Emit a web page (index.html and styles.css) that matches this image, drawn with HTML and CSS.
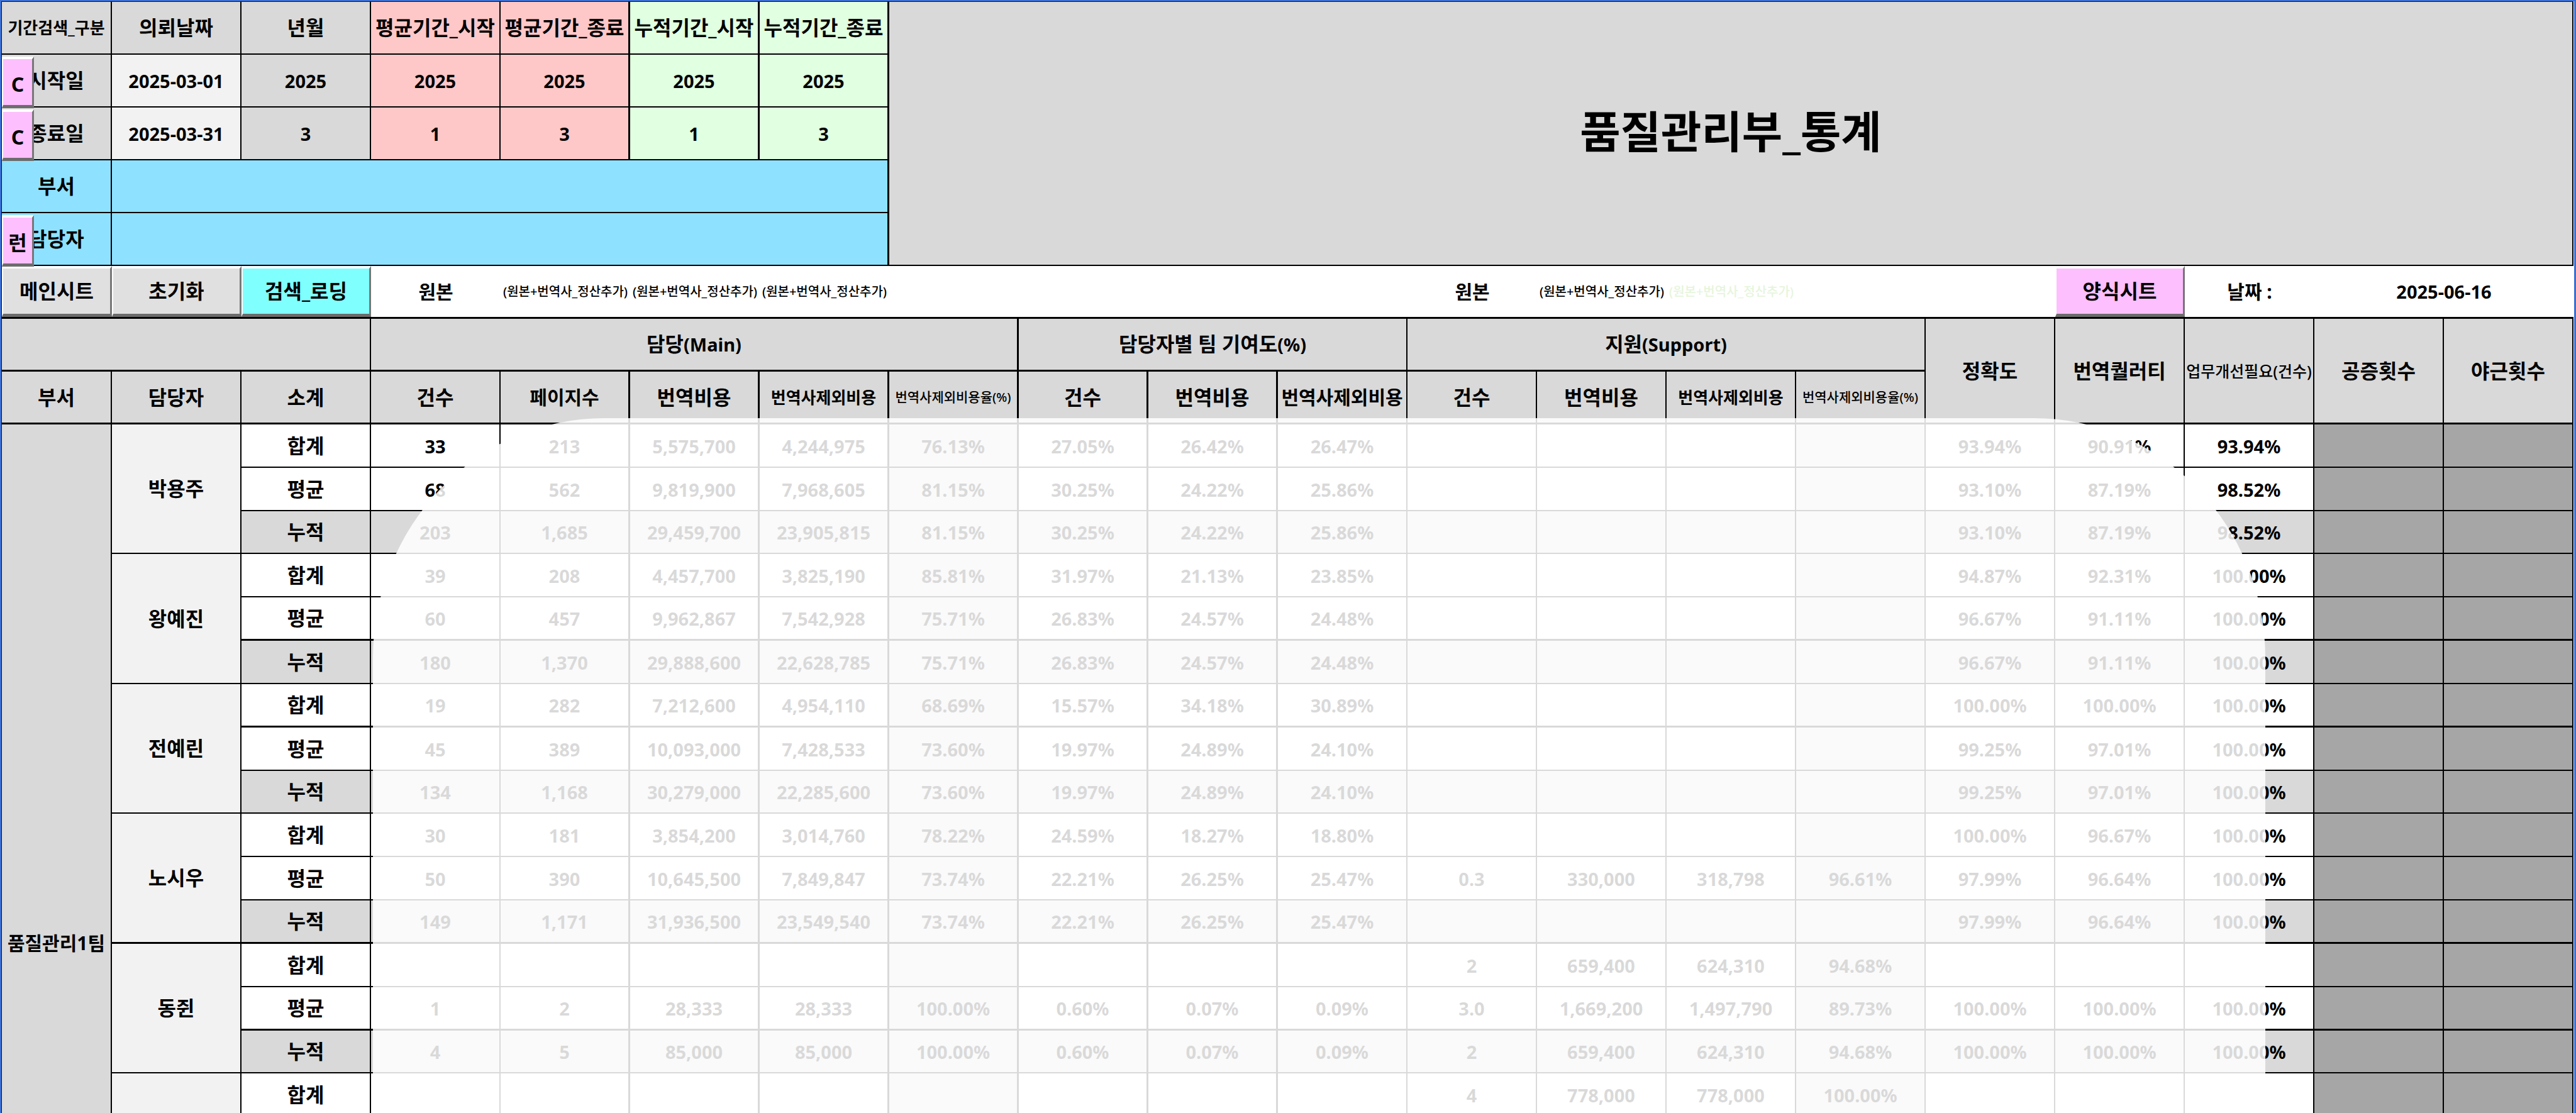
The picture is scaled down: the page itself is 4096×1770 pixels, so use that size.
FILE: index.html
```html
<!DOCTYPE html>
<html lang="ko">
<head>
<meta charset="utf-8">
<title>품질관리부_통계</title>
<link rel="stylesheet" href="styles.css">
</head>
<body>
<main class="window">
<div class="sheet">

<header class="top columns">
<table class="filter">
<colgroup><col class="first"><col><col><col><col><col><col></colgroup>
<tr><th class="mid">기간검색_구분</th><th>의뢰날짜</th><th>년월</th><th class="pink">평균기간_시작</th><th class="pink heavy">평균기간_종료</th><th class="green heavy">누적기간_시작</th><th class="green heavy">누적기간_종료</th></tr>
<tr><th class="anchor">시작일<button class="key" type="button">C</button></th><td class="pale">2025-03-01</td><td>2025</td><td class="pink">2025</td><td class="pink heavy">2025</td><td class="green heavy">2025</td><td class="green heavy">2025</td></tr>
<tr><th class="anchor">종료일<button class="key" type="button">C</button></th><td class="pale">2025-03-31</td><td>3</td><td class="pink">1</td><td class="pink heavy">3</td><td class="green heavy">1</td><td class="green heavy">3</td></tr>
<tr><th class="sky">부서</th><td class="sky heavy" colspan="6"></td></tr>
<tr><th class="sky anchor">담당자<button class="key" type="button">런</button></th><td class="sky heavy" colspan="6"></td></tr>
</table>
<h1 class="title">품질관리부_통계</h1>
</header>

<div class="toolbar columns">
<button class="tool" type="button">메인시트</button>
<button class="tool" type="button">초기화</button>
<button class="tool cyan" type="button">검색_로딩</button>
<span class="origin">원본</span>
<span class="note">(원본+번역사_정산추가)</span>
<span class="note">(원본+번역사_정산추가)</span>
<span class="note">(원본+번역사_정산추가)</span>
<span class="origin support">원본</span>
<span class="note">(원본+번역사_정산추가)</span>
<span class="note faint">(원본+번역사_정산추가)</span>
<button class="tool violet form" type="button">양식시트</button>
<span class="origin">날짜 :</span>
<span class="date">2025-06-16</span>
</div>

<section class="stats">
<table class="data">
<colgroup><col class="first"><col span="19"></colgroup>
<thead>
<tr><th colspan="3"></th><th class="heavy" colspan="5">담당<span class="latin">(Main)</span></th><th colspan="3">담당자별 팀 기여도<span class="latin">(%)</span></th><th colspan="4">지원<span class="latin">(Support)</span></th><th rowspan="2">정확도</th><th rowspan="2">번역퀄러티</th><th class="need" rowspan="2">업무개선필요(건수)</th><th rowspan="2">공증횟수</th><th rowspan="2">야근횟수</th></tr>
<tr><th>부서</th><th>담당자</th><th>소계</th><th>건수</th><th class="wide heavy">페이지수</th><th class="heavy">번역비용</th><th class="mid heavy">번역사제외비용</th><th class="rate heavy">번역사제외비용율<span class="latin">(%)</span></th><th class="heavy">건수</th><th class="heavy">번역비용</th><th class="wide">번역사제외비용</th><th>건수</th><th>번역비용</th><th class="mid">번역사제외비용</th><th class="rate">번역사제외비용율<span class="latin">(%)</span></th></tr>
</thead>
<tbody>
<tr><th class="team" rowspan="24">품질관리1팀</th><th class="person" rowspan="3">박용주</th><th>합계</th><td>33</td><td>213</td><td>5,575,700</td><td>4,244,975</td><td>76.13%</td><td>27.05%</td><td>26.42%</td><td>26.47%</td><td></td><td></td><td></td><td></td><td>93.94%</td><td>90.91%</td><td>93.94%</td><td></td><td></td></tr>
<tr><th>평균</th><td>68</td><td>562</td><td>9,819,900</td><td>7,968,605</td><td>81.15%</td><td>30.25%</td><td>24.22%</td><td>25.86%</td><td></td><td></td><td></td><td></td><td>93.10%</td><td>87.19%</td><td>98.52%</td><td></td><td></td></tr>
<tr class="total"><th>누적</th><td>203</td><td>1,685</td><td>29,459,700</td><td>23,905,815</td><td>81.15%</td><td>30.25%</td><td>24.22%</td><td>25.86%</td><td></td><td></td><td></td><td></td><td>93.10%</td><td>87.19%</td><td>98.52%</td><td></td><td></td></tr>
<tr><th class="person" rowspan="3">왕예진</th><th>합계</th><td>39</td><td>208</td><td>4,457,700</td><td>3,825,190</td><td>85.81%</td><td>31.97%</td><td>21.13%</td><td>23.85%</td><td></td><td></td><td></td><td></td><td>94.87%</td><td>92.31%</td><td>100.00%</td><td></td><td></td></tr>
<tr class="strong"><th>평균</th><td>60</td><td>457</td><td>9,962,867</td><td>7,542,928</td><td>75.71%</td><td>26.83%</td><td>24.57%</td><td>24.48%</td><td></td><td></td><td></td><td></td><td>96.67%</td><td>91.11%</td><td>100.00%</td><td></td><td></td></tr>
<tr class="total"><th>누적</th><td>180</td><td>1,370</td><td>29,888,600</td><td>22,628,785</td><td>75.71%</td><td>26.83%</td><td>24.57%</td><td>24.48%</td><td></td><td></td><td></td><td></td><td>96.67%</td><td>91.11%</td><td>100.00%</td><td></td><td></td></tr>
<tr class="strong"><th class="person thin" rowspan="3">전예린</th><th>합계</th><td>19</td><td>282</td><td>7,212,600</td><td>4,954,110</td><td>68.69%</td><td>15.57%</td><td>34.18%</td><td>30.89%</td><td></td><td></td><td></td><td></td><td>100.00%</td><td>100.00%</td><td>100.00%</td><td></td><td></td></tr>
<tr><th>평균</th><td>45</td><td>389</td><td>10,093,000</td><td>7,428,533</td><td>73.60%</td><td>19.97%</td><td>24.89%</td><td>24.10%</td><td></td><td></td><td></td><td></td><td>99.25%</td><td>97.01%</td><td>100.00%</td><td></td><td></td></tr>
<tr class="total"><th>누적</th><td>134</td><td>1,168</td><td>30,279,000</td><td>22,285,600</td><td>73.60%</td><td>19.97%</td><td>24.89%</td><td>24.10%</td><td></td><td></td><td></td><td></td><td>99.25%</td><td>97.01%</td><td>100.00%</td><td></td><td></td></tr>
<tr><th class="person thick" rowspan="3">노시우</th><th>합계</th><td>30</td><td>181</td><td>3,854,200</td><td>3,014,760</td><td>78.22%</td><td>24.59%</td><td>18.27%</td><td>18.80%</td><td></td><td></td><td></td><td></td><td>100.00%</td><td>96.67%</td><td>100.00%</td><td></td><td></td></tr>
<tr><th>평균</th><td>50</td><td>390</td><td>10,645,500</td><td>7,849,847</td><td>73.74%</td><td>22.21%</td><td>26.25%</td><td>25.47%</td><td>0.3</td><td>330,000</td><td>318,798</td><td>96.61%</td><td>97.99%</td><td>96.64%</td><td>100.00%</td><td></td><td></td></tr>
<tr class="total strong"><th>누적</th><td>149</td><td>1,171</td><td>31,936,500</td><td>23,549,540</td><td>73.74%</td><td>22.21%</td><td>26.25%</td><td>25.47%</td><td></td><td></td><td></td><td></td><td>97.99%</td><td>96.64%</td><td>100.00%</td><td></td><td></td></tr>
<tr><th class="person" rowspan="3">동쥔</th><th>합계</th><td></td><td></td><td></td><td></td><td></td><td></td><td></td><td></td><td>2</td><td>659,400</td><td>624,310</td><td>94.68%</td><td></td><td></td><td></td><td></td><td></td></tr>
<tr class="strong"><th>평균</th><td>1</td><td>2</td><td>28,333</td><td>28,333</td><td>100.00%</td><td>0.60%</td><td>0.07%</td><td>0.09%</td><td>3.0</td><td>1,669,200</td><td>1,497,790</td><td>89.73%</td><td>100.00%</td><td>100.00%</td><td>100.00%</td><td></td><td></td></tr>
<tr class="total"><th>누적</th><td>4</td><td>5</td><td>85,000</td><td>85,000</td><td>100.00%</td><td>0.60%</td><td>0.07%</td><td>0.09%</td><td>2</td><td>659,400</td><td>624,310</td><td>94.68%</td><td>100.00%</td><td>100.00%</td><td>100.00%</td><td></td><td></td></tr>
<tr><th class="person" rowspan="3"></th><th>합계</th><td></td><td></td><td></td><td></td><td></td><td></td><td></td><td></td><td>4</td><td>778,000</td><td>778,000</td><td>100.00%</td><td></td><td></td><td></td><td></td><td></td></tr>
<tr></tr>
<tr></tr>
<tr></tr>
<tr></tr>
<tr></tr>
<tr></tr>
<tr></tr>
<tr></tr>
</tbody>
</table>
<div class="veil"></div>
</section>

</div>
</main>
</body>
</html>
```

FILE: styles.css
```css
* {
  box-sizing: border-box;
}

body {
  margin: 0;
  background: #fff;
  color: #000;
  font-family: "Noto Sans", "Noto Sans CJK KR", sans-serif;
  font-weight: 700;
  font-size: 29px;
  line-height: 40px;
  white-space: nowrap;
}

.window {
  height: 100vh;
  overflow: hidden;
  border: solid #3d6fd0;
  border-width: 2px 3px 0 2px;
  padding-right: 1px;
}

.sheet {
  border: solid #111;
  border-width: 1px 0 0 1px;
}

.columns {
  display: grid;
  grid-template-columns: 175px repeat(19, minmax(0, 1fr));
}

/* Tables */
table {
  width: 100%;
  table-layout: fixed;
  border-collapse: separate;
  border-spacing: 0;
}

.first {
  width: 175px;
}

th,
td {
  padding: 0;
  border: solid #000;
  border-width: 0 2px 2px 0;
  text-align: center;
  vertical-align: middle;
}

td {
  padding-top: 2px;
}

th {
  font-size: 32px;
}

.heavy {
  border-right-width: 3px;
}

.mid {
  font-size: 26px;
}

.wide {
  font-size: 30px;
}

.latin {
  font-size: 29px;
}

/* Period filter and title */
.filter {
  grid-column: 1 / 8;
  background: #d9d9d9;
}

.filter tr {
  height: 84px;
}

.pale {
  background: #f2f2f2;
}

.pink {
  background: #ffc8c8;
}

.green {
  background: #e1ffe1;
}

.sky {
  background: #8ee2ff;
}

.anchor {
  position: relative;
}

.title {
  grid-column: 8 / -1;
  display: flex;
  align-items: center;
  justify-content: center;
  margin: 0;
  padding-bottom: 6px;
  border: solid #000;
  border-width: 0 2px 2px 0;
  background: #d9d9d9;
  font-size: 70px;
  line-height: 100px;
}

/* Raised sheet buttons */
button {
  padding: 0;
  border: solid;
  border-width: 4px 3px 5px 2px;
  border-color: #fff #777 #6c6c6c #fff;
  color: #000;
  font: inherit;
  font-size: 32px;
}

.key {
  position: absolute;
  top: 3px;
  left: 0;
  width: 51px;
  height: 82px;
  padding-top: 6px;
  background: #fdbffd;
}

.tool {
  background: #e0e0e0;
}

.cyan {
  background: #80ffff;
}

.violet {
  background: #fdbffd;
}

/* Toolbar */
.toolbar {
  height: 84px;
  align-items: center;
  border-bottom: 3px solid #000;
  text-align: center;
}

.tool {
  align-self: stretch;
}

.origin {
  font-size: 30px;
}

.support {
  grid-column: 12;
}

.form {
  grid-column: 17;
}

.note {
  font-size: 20px;
  font-weight: 500;
}

.faint {
  color: #e6f5dc;
}

.date {
  grid-column: span 2;
}

/* Statistics */
.stats {
  position: relative;
}

thead tr {
  height: 84px;
}

thead th {
  border-bottom-width: 3px;
  background: #d9d9d9;
}

.need {
  font-size: 25px;
  font-weight: 500;
}

.rate {
  font-size: 21px;
  font-weight: 500;
}

.rate .latin {
  font-size: 20px;
}

tbody .team {
  background: #d9d9d9;
  font-size: 30px;
}

tbody .person {
  background: #f2f2f2;
}

.data tbody tr {
  height: 69px;
}

.data tbody tr:nth-child(6n + 3) {
  height: 68px;
}

.total > th,
.total > td {
  background: #d9d9d9;
}

.strong > th,
.strong > td,
.data .thick {
  border-bottom-width: 3px;
}

.data .thin {
  border-bottom-width: 2px;
}

/* Money and contribution columns have heavier dividers */
.data td:nth-last-child(n + 11):nth-last-child(-n + 16) {
  border-right-width: 3px;
}

/* Cost-rate columns */
.data td:nth-last-child(6),
.data td:nth-last-child(13) {
  background: #d9d9d9;
}

/* Notary and overtime columns */
.data td:nth-last-child(-n + 2) {
  background: #a6a6a6;
}

.veil {
  position: absolute;
  top: 158px;
  right: 490px;
  bottom: 0;
  left: 590px;
  border-radius: 368px 368px 0 0 / 382px 382px 0 0;
  background: rgba(255, 255, 255, 0.85);
}
```
